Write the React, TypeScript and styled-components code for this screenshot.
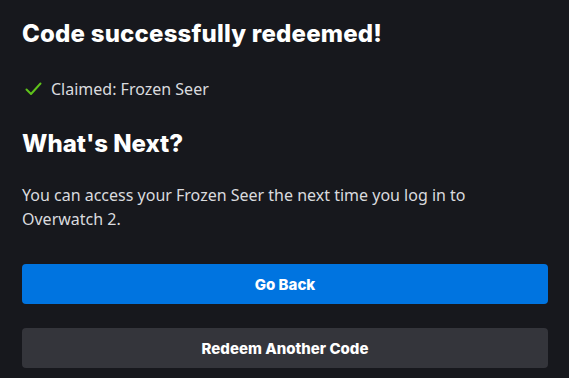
import React from "react";
import styled, { createGlobalStyle } from "styled-components";

const Global = createGlobalStyle`
  html, body { margin: 0; padding: 0; background: #17181d; }
  body { font-family: "Noto Sans", "Open Sans", sans-serif; }
`;

const Page = styled.div`
  width: 569px;
  height: 378px;
  box-sizing: border-box;
  padding: 19px 21px 0 22px;
  background: #17181d;
  color: #fff;
  display: flex;
  flex-direction: column;
`;

const Title = styled.h1`
  margin: 0;
  font-family: Inter, "Liberation Sans", sans-serif;
  font-weight: 800;
  font-size: 24px;
  line-height: 30px;
  letter-spacing: 0.2px;
  color: #fff;
`;

const Claimed = styled.div`
  display: flex;
  align-items: center;
  gap: 9px;
  margin-top: 30px;
  margin-left: 3px;
  font-size: 16px;
  line-height: 20px;
  color: #dadbdf;
`;

const Heading = styled.h2`
  margin: 30px 0 0;
  font-family: Inter, "Liberation Sans", sans-serif;
  font-weight: 800;
  font-size: 24px;
  line-height: 30px;
  color: #fff;
`;

const Body = styled.p`
  margin: 24px 0 0;
  font-size: 16px;
  line-height: 24px;
  color: #dadbdf;
  max-width: 500px;
`;

const Actions = styled.div`
  display: flex;
  flex-direction: column;
  gap: 24px;
  margin-top: 33px;
`;

const Button = styled.button<{ $variant: "primary" | "secondary" }>`
  height: 40px;
  width: 100%;
  border: none;
  border-radius: 4px;
  background: ${(p) => (p.$variant === "primary" ? "#0074e0" : "#34353b")};
  color: #fff;
  font-family: Inter, "Liberation Sans", sans-serif;
  font-weight: 800;
  font-size: 15px;
  cursor: pointer;
`;

export default function App() {
  return (
    <>
      <Global />
      <Page>
        <Title>Code successfully redeemed!</Title>
        <Claimed>
          <svg width="17" height="14" viewBox="0 0 17 14" fill="none">
            <path d="M1.5 7.5 L6 12 L15.5 1.5" stroke="#5fc21b" strokeWidth="2" strokeLinecap="round" strokeLinejoin="round" />
          </svg>
          <span>Claimed: Frozen Seer</span>
        </Claimed>
        <Heading>What's Next?</Heading>
        <Body>You can access your Frozen Seer the next time you log in to Overwatch 2.</Body>
        <Actions>
          <Button $variant="primary">Go Back</Button>
          <Button $variant="secondary">Redeem Another Code</Button>
        </Actions>
      </Page>
    </>
  );
}
